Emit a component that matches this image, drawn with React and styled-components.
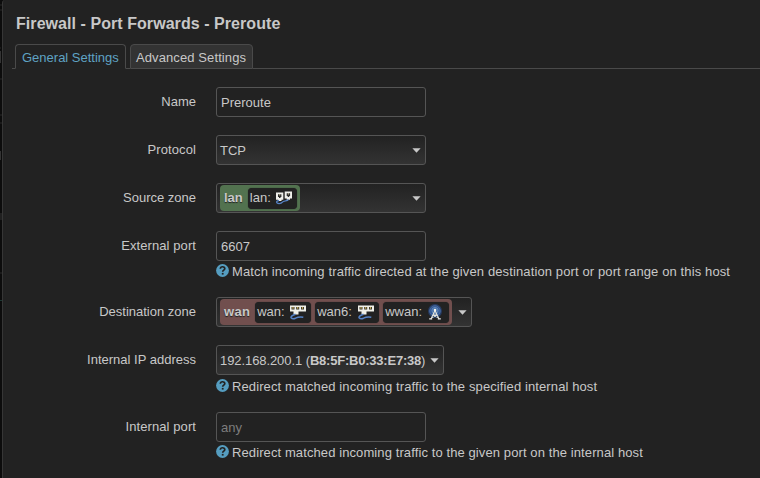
import React from "react";
import styled, { createGlobalStyle, css } from "styled-components";

const GlobalStyle = createGlobalStyle`
  * { box-sizing: border-box; }
  body { margin: 0; background: #0c0c0c; overflow: hidden; }
`;

const Page = styled.div`
  display: flex;
  width: 760px;
  height: 478px;
  overflow: hidden;
  background: #0c0c0c;
  color: #c8c8c8;
  font: 13px/18px "Liberation Sans", Arial, sans-serif;
  white-space: nowrap;
`;

const Backdrop = styled.svg`
  flex: none;
  width: 2px;
  height: 478px;
`;

const Modal = styled.main`
  flex: 1;
  min-width: 0;
  height: 486px;
  padding: 14px 0 0 12px;
  background: #222;
  border-left: 1px solid #363636;
  border-top-left-radius: 3px;
`;

const Title = styled.h4`
  margin: 0 0 11px 1px;
  font-size: 16px;
  line-height: 19px;
  font-weight: bold;
  letter-spacing: 0.06px;
`;

const Tabs = styled.nav`
  display: flex;
  align-items: flex-end;
  height: 25px;

  &::before {
    content: "";
    width: 3px;
    margin-left: -3px;
    border-bottom: 1px solid #4a4a4a;
  }
  &::after {
    content: "";
    flex: 1;
    border-bottom: 1px solid #4a4a4a;
  }
`;

const Tab = styled.a`
  width: ${(p) => p.$width}px;
  height: 25px;
  padding: 4px 0 0 ${(p) => (p.$active ? 6 : 5)}px;
  border: 1px solid #4a4a4a;
  border-bottom-color: ${(p) => (p.$active ? "#222" : "#4a4a4a")};
  border-radius: 4px 4px 0 0;
  background: ${(p) => (p.$active ? "#222" : "#333")};
  color: ${(p) => (p.$active ? "#5fa3c4" : "#c8c8c8")};
  letter-spacing: ${(p) => p.$spacing || 0}px;
`;

const TabGap = styled.span`
  width: 4px;
  border-bottom: 1px solid #4a4a4a;
`;

const Form = styled.form`
  display: flex;
  flex-direction: column;
  padding-top: 18px;
`;

const Row = styled.div`
  display: grid;
  grid-template-columns: 181px 1fr;
  column-gap: 20px;
  height: ${(p) => p.$height || 48}px;
`;

const Label = styled.label`
  padding-top: 6px;
  text-align: right;
  letter-spacing: ${(p) => p.$spacing || 0}px;
`;

const fieldBox = css`
  display: flex;
  align-items: center;
  width: ${(p) => p.$width || 210}px;
  height: 30px;
  border: 1px solid #555;
  border-radius: 3px;
`;

const TextBox = styled.input`
  ${fieldBox}
  display: block;
  padding: 0 4px;
  outline: none;
  background: #222;
  color: #c8c8c8;
  font: inherit;

  &::placeholder { color: #7d7d7d; opacity: 1; }
`;

const Dropdown = styled.div`
  ${fieldBox}
  justify-content: space-between;
  padding: 0 4px 0 3px;
  background: linear-gradient(#222, #333);
`;

const Value = styled.span`
  padding-top: 2px;
  letter-spacing: ${(p) => p.$spacing || 0}px;
`;

const Mac = styled.b`
  letter-spacing: -0.22px;
`;

const CaretIcon = styled.svg`
  flex: none;
  width: 9px;
  height: 5px;
  fill: #c8c8c8;
`;

const Zone = styled.span`
  display: flex;
  align-items: center;
  gap: 5px;
  height: 26px;
  padding: 0 3px 0 4px;
  border-radius: 4px;
  background: ${(p) => p.$color};
`;

const ZoneName = styled.strong`
  text-shadow: 0 1px 1px #222;
  letter-spacing: ${(p) => p.$spacing || 0}px;
`;

const Networks = styled.span`
  display: flex;
  gap: 4px;
`;

const Network = styled.span`
  display: flex;
  align-items: center;
  justify-content: space-between;
  width: ${(p) => p.$width}px;
  height: 21px;
  padding: 0 ${(p) => p.$end || 4}px 0 2px;
  border-radius: 4px;
  background: #222;
  box-shadow: 0 0 1px #222;
`;

const DeviceIcon = styled.svg`
  flex: none;
  width: 18px;
  height: 18px;
`;

const Help = styled.div`
  display: flex;
  align-items: center;
  gap: 3px;
  height: 18px;
  margin-top: ${(p) => p.$top || 2}px;
  letter-spacing: ${(p) => p.$spacing || 0}px;
`;

const HelpIcon = styled.svg`
  flex: none;
  width: 13px;
  height: 13px;
  margin-top: -3px;
`;

const Caret = () => (
  <CaretIcon viewBox="0 0 9 5"><path d="M0.4 0.2H8.6L4.5 4.7Z" /></CaretIcon>
);

const BridgeIcon = () => (
  <DeviceIcon viewBox="0 0 18 18">
    <path d="M1 3.5h7.3v7.2H6.5v1.2H3v-1.2H1zM9.7 2.5H17v7h-2v1.3h-3.3V9.500h-2z" fill="#f0f0ec" />
    <path d="M3 5.200h3.400v2.800H5.500v1H4v-1H3zM11.700 4.200h3.400V7h-.9v1h-1.500V7h-1z" fill="#2c2c2c" />
    <path d="M4.700 5v1.700M13.400 4v1.700" stroke="#c9c29b" strokeWidth=".8" />
    <path d="M4 11.500Q1 12 1.800 13.700q2 1.600 4.700.2 1.600-2 4-2.100 2.500-.1 2.800-1.300" fill="none" stroke="#5582c6" strokeWidth="1.300" />
  </DeviceIcon>
);

const EthernetIcon = () => (
  <DeviceIcon viewBox="0 0 18 18">
    <path d="M1 2.500h16v6H1zM4.500 8.500h5v3h-5z" fill="#f0f0e8" />
    <path d="M2.500 4h3v2.500h-3zM7.200 4h3v2.500h-3zM12 4h3v2.500h-3z" fill="#34322a" />
    <path d="M4 4v1.700M8.700 4v1.700M13.500 4v1.700" stroke="#cdb25c" strokeWidth="1.200" />
    <path d="M6.500 11.200Q1.500 13 2 14.700q1.600 1.600 4.500.5 3.500-1.700 7.800-.9" fill="none" stroke="#5582c6" strokeWidth="1.500" />
  </DeviceIcon>
);

const WifiIcon = () => (
  <DeviceIcon viewBox="0 0 18 18">
    <circle cx="9" cy="8" r="7" fill="#263b62" />
    <circle cx="9" cy="8" r="5.300" fill="#325998" stroke="#47699d" />
    <circle cx="9" cy="7.500" r="3.100" fill="#416da9" stroke="#6d8fb7" strokeWidth=".8" />
    <path d="M9 7.500L5 16M9 7.500l4 8.500M7 12h4M6 14.500l5-2.500M12 14.500L7 12" fill="none" stroke="#e5e5dd" strokeWidth="1.100" />
    <path d="M3.200 15.800h3M11.800 15.800h3" stroke="#eee" strokeWidth="1.200" />
    <circle cx="9" cy="7" r="1.300" fill="#f3f3ed" />
  </DeviceIcon>
);

const Question = () => (
  <HelpIcon viewBox="0 0 13 13">
    <circle cx="6.500" cy="6.500" r="6.400" fill="#559dc0" />
    <path d="M4.300 4.800c.1-2.700 4.500-2.700 4.500-.2 0 1.600-2.100 1.500-2.100 3.100" fill="none" stroke="#222" strokeWidth="1.700" />
    <path d="M5.800 8.900h1.800v1.700H5.800z" fill="#222" />
  </HelpIcon>
);

export default function App() {
  return (
    <>
      <GlobalStyle />
      <Page>
        <Backdrop viewBox="0 0 2 478">
          <path d="M0 5h2M0 10h2M0 48h1M0 79h2M0 115h2M0 123h2M0 273h2" stroke="#292929" />
          <path d="M.5 51v12M.5 151v9M1 213v7" stroke="#343434" />
          <path d="M0 300.5h2" stroke="#1c3833" />
        </Backdrop>
        <Modal>
          <Title>Firewall - Port Forwards - Preroute</Title>
          <Tabs>
            <Tab $active $width={111}>General Settings</Tab>
            <TabGap />
            <Tab $width={123} $spacing={0.1}>Advanced Settings</Tab>
          </Tabs>
          <Form>
            <Row><Label>Name</Label><TextBox defaultValue="Preroute" /></Row>
            <Row><Label $spacing={0.1}>Protocol</Label><Dropdown><Value>TCP</Value><Caret /></Dropdown></Row>
            <Row>
              <Label>Source zone</Label>
              <Dropdown>
                <Zone $color="#52724f">
                  <ZoneName>lan</ZoneName>
                  <Networks><Network $width={49}>lan: <BridgeIcon /></Network></Networks>
                </Zone>
                <Caret />
              </Dropdown>
            </Row>
            <Row $height={66}>
              <Label $spacing={0.08}>External port</Label>
              <div>
                <TextBox defaultValue="6607" />
                <Help $spacing={0.12}><Question />Match incoming traffic directed at the given destination port or port range on this host</Help>
              </div>
            </Row>
            <Row>
              <Label>Destination zone</Label>
              <Dropdown $width={256}>
                <Zone $color="#714f4e">
                  <ZoneName $spacing={0.3}>wan</ZoneName>
                  <Networks>
                    <Network $width={56}>wan: <EthernetIcon /></Network>
                    <Network $width={64}>wan6: <EthernetIcon /></Network>
                    <Network $width={66} $end={5}>wwan: <WifiIcon /></Network>
                  </Networks>
                </Zone>
                <Caret />
              </Dropdown>
            </Row>
            <Row $height={67}>
              <Label>Internal IP address</Label>
              <div>
                <Dropdown $width={228}><Value $spacing={-0.08}>192.168.200.1 (<Mac>B8:5F:B0:33:E7:38</Mac>)</Value><Caret /></Dropdown>
                <Help $top={3} $spacing={0.11}><Question />Redirect matched incoming traffic to the specified internal host</Help>
              </div>
            </Row>
            <Row>
              <Label $spacing={0.08}>Internal port</Label>
              <div>
                <TextBox placeholder="any" />
                <Help $spacing={0.1}><Question />Redirect matched incoming traffic to the given port on the internal host</Help>
              </div>
            </Row>
          </Form>
        </Modal>
      </Page>
    </>
  );
}
